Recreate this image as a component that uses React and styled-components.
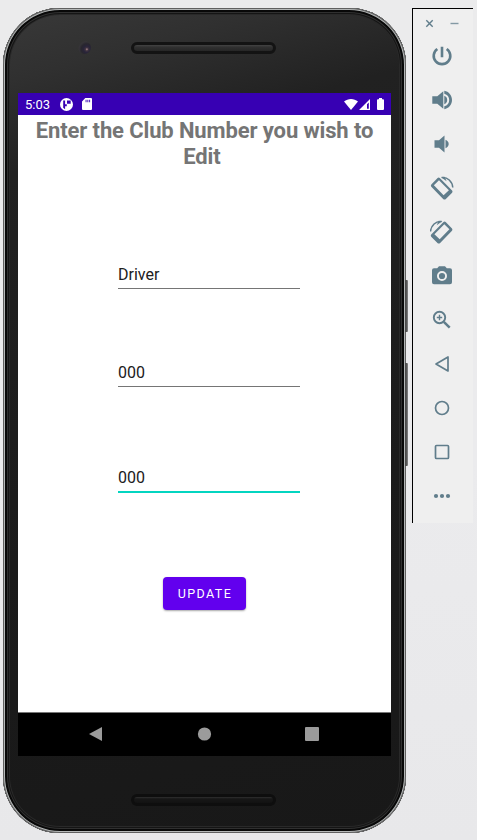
import React from "react";
import styled, { createGlobalStyle } from "styled-components";

const GlobalStyle = createGlobalStyle`
  * { box-sizing: border-box; }
  body { margin: 0; overflow: hidden; background: #e9e9eb; font-family: Roboto, sans-serif; }
`;

const Desktop = styled.div`
  display: flex;
  align-items: flex-start;
  gap: 6px;
  width: 477px;
  height: 840px;
  padding: 8px 4px 0 3px;
  background: linear-gradient(180deg, #ebebec 0%, #ebebed 55%, #e8e8ea 100%);
`;

const Phone = styled.div`
  position: relative;
  display: flex;
  flex-direction: column;
  flex: none;
  width: 403px;
  height: 825px;
  padding: 0 15px;
  border-radius: 57px;
  background: linear-gradient(165deg, #393939 0%, #303030 8%, #212121 18%, #1b1b1b 60%, #181818 100%);
  box-shadow: inset 0 0 0 1px #606060, inset 0 0 0 2px #b4b7b7, inset 0 0 0 4px #080808,
    inset 0 0 0 5px #303030, inset 0 0 0 6px #151515, inset 0 0 0 7px #292929;
`;

const SideKey = styled.span`
  position: absolute;
  left: 402px;
  top: ${(p) => p.$top}px;
  width: 3px;
  height: ${(p) => p.$height}px;
  border-radius: 0 1px 1px 0;
  background: linear-gradient(90deg, #444, #555 50%, #898989);
`;

const TopBezel = styled.div`
  display: flex;
  flex: none;
  align-items: center;
  height: 85px;
  padding: 0 0 6px 60px;
`;

const Camera = styled.span`
  width: 13px;
  height: 13px;
  margin-right: 40px;
  border-radius: 50%;
  background: radial-gradient(circle at 68% 64%, #8d7078 0 4%, #40343f 12%, #29243a 26%, #28262e 46%, #363438 64%, #323232 75%);
`;

const Speaker = styled.span`
  width: 145px;
  height: 12px;
  border: 3px solid ${(p) => (p.$dim ? "#0e0e0e" : "#131313")};
  border-radius: 6px;
  background: linear-gradient(180deg, ${(p) => (p.$dim ? "#303030, #171717 30%, #121212" : "#444, #303030 35%, #262626")});
`;

const BottomBezel = styled.div`
  display: flex;
  padding: 38px 0 0 113px;
`;

const Screen = styled.main`
  display: flex;
  flex: none;
  flex-direction: column;
  height: 663px;
  background: #fff;
`;

const StatusBar = styled.div`
  display: flex;
  flex: none;
  align-items: center;
  height: 22px;
  padding: 0 7px 0 7px;
  background: #3700b3;
  color: #fff;
  font-size: 13px;
  line-height: 22px;
`;

const Clock = styled.span`
  width: 35px;
  padding-top: 1px;
  font-weight: 400;
`;

const StatusIcon = styled.svg`
  flex: none;
  width: ${(p) => p.$w}px;
  height: ${(p) => p.$h}px;
  margin-left: ${(p) => p.$left || 0}px;
  fill: currentColor;
`;

const Spacer = styled.span`
  flex: 1;
`;

const Form = styled.form`
  display: flex;
  flex: 1;
  flex-direction: column;
  align-items: center;
`;

const Heading = styled.h1`
  width: 361px;
  margin: 3px 0 0;
  color: #757575;
  font-size: 22px;
  font-weight: 700;
  line-height: 26px;
  letter-spacing: -0.12px;
  text-align: center;
`;

const Field = styled.input`
  width: 182px;
  height: ${(p) => (p.$active ? 31 : 30)}px;
  margin: ${(p) => p.$gap}px 0 0 9px;
  padding: 1px 0 0;
  border: 0;
  border-bottom: ${(p) => (p.$active ? "2px solid #03d5c0" : "1px solid #757575")};
  border-radius: 0;
  outline: 0;
  background: transparent;
  color: #202020;
  font: 400 16px Roboto, sans-serif;
`;

const UpdateButton = styled.button`
  width: 83px;
  height: 33px;
  margin: 84px 0 0 0;
  padding: 0 0 0 1px;
  border: 0;
  border-radius: 4px;
  background: #6200ee;
  box-shadow: 0 1px 2px rgba(0, 0, 0, 0.35);
  color: #fff;
  font: 400 12.5px Roboto, sans-serif;
  letter-spacing: 1.4px;
`;

const NavBar = styled.nav`
  display: flex;
  flex: none;
  align-items: center;
  justify-content: space-between;
  height: 44px;
  padding: 0 71px 2px 70px;
  border-top: 1px solid #777;
  background: #000;
`;

const NavIcon = styled.svg`
  width: 16px;
  height: 16px;
  fill: #9b9b9b;
`;

const Toolbar = styled.aside`
  display: flex;
  flex: none;
  flex-direction: column;
  width: 61px;
  height: 515px;
  border-top: 1px solid #000;
  border-left: 1px solid #000;
  background: #efefef;
  color: #607d8b;
`;

const WindowControls = styled.div`
  display: flex;
  flex: none;
  align-items: center;
  justify-content: space-between;
  height: 25px;
  padding: 3px 14px 0 12px;
`;

const ControlIcon = styled.svg`
  width: 9px;
  height: 9px;
  fill: none;
  stroke: currentColor;
  stroke-width: 1.4;
  opacity: ${(p) => (p.$faded ? 0.75 : 1)};
`;

const Tool = styled.div`
  display: flex;
  flex: none;
  align-items: center;
  justify-content: center;
  height: 44px;
  padding-right: 2px;
`;

const ToolIcon = styled.svg`
  width: 24px;
  height: 24px;
  fill: currentColor;
`;

const Outline = styled.g`
  fill: none;
  stroke: currentColor;
  stroke-width: ${(p) => p.$weight || 1.5};
  stroke-linejoin: round;
`;

const RotateGlyph = () => (
  <>
    <path
      fillRule="evenodd"
      d="M7.6 1.9Q8.7 1 9.8 1.9L22.1 14.6Q23 15.7 22.1 16.8L15.6 23.2Q14.5 24 13.4 23.2L1.3 10.7Q.4 9.5 1.3 8.4ZM9 4.2L3.9 9.2 13.6 19.2 18.9 14.2Z"
    />
    <path d="M11.7 1.5C17.4 .7 22.4 5.6 22.8 11.5" fill="none" stroke="currentColor" strokeWidth="1.5" />
    <path d="M11 1.2L14.6.7 16.6 5.2Z" />
  </>
);

const tools = [
  <Outline key="power" $weight={2.6}><path d="M7.3 5a8.3 8.3 0 1 0 9.4 0M12 2.7v10.6" /></Outline>,
  <path key="up" d="M2.3 8.3v7.4h5l6 5V3.3l-6 5zM14.3 7.8v8.4a4.5 4.5 0 0 0 0-8.4zM14.3 2.8v2.9c3.2.8 4.9 3.3 4.9 6.3s-1.7 5.5-4.9 6.3v2.9c4.5-.8 7.7-4.5 7.7-9.2s-3.2-8.4-7.7-9.2z" />,
  <path key="down" d="M4.5 8.3v7.4H9l5.5 4.8V3.5L9 8.3zM15.5 7.8v8.4c1.9-.7 3.2-2.3 3.2-4.2s-1.3-3.5-3.2-4.2z" />,
  <RotateGlyph key="left" />,
  <g key="right" transform="translate(23.3 0) scale(-1 1)"><RotateGlyph /></g>,
  <path key="camera" fillRule="evenodd" d="M9 2.2L7.2 4.2H4a2 2 0 0 0-2 2v12a2 2 0 0 0 2 2h16a2 2 0 0 0 2-2v-12a2 2 0 0 0-2-2h-3.2L15 2.2zM12 7a5 5 0 1 1 0 10 5 5 0 0 1 0-10zm0 1.9a3.1 3.1 0 1 0 0 6.2 3.1 3.1 0 0 0 0-6.2z" />,
  <Outline key="zoom" $weight={1.9}><circle cx="9.5" cy="9.5" r="5.7" /><path d="M9.5 6.8v5.4M6.8 9.5h5.4" strokeWidth="1.4" /><path d="M13.8 13.8l5.9 5.9" strokeWidth="2.5" /></Outline>,
  <Outline key="back" $weight={1.7}><path d="M18 5v14L6 12z" /></Outline>,
  <Outline key="home" $weight={1.7}><circle cx="12" cy="12" r="6.5" /></Outline>,
  <Outline key="recent" $weight={1.7}><rect x="5.5" y="5.5" width="13" height="13" rx="1" /></Outline>,
  <g key="more"><circle cx="6" cy="12" r="2.1" /><circle cx="12" cy="12" r="2.1" /><circle cx="18" cy="12" r="2.1" /></g>,
];

export default function App() {
  return (
    <>
      <GlobalStyle />
      <Desktop>
        <Phone>
          <SideKey $top={272} $height={52} />
          <SideKey $top={355} $height={103} />
          <TopBezel>
            <Camera />
            <Speaker />
          </TopBezel>
          <Screen>
            <StatusBar>
              <Clock>5:03</Clock>
              <StatusIcon $w={13} $h={13} viewBox="0 0 13 13">
                <path fillRule="evenodd" d="M6.5 0a6.5 6.5 0 1 1 0 13 6.5 6.5 0 0 1 0-13zM3.2 2.5v7.3l1.9 1.5V8.2H6.8V6.2H5.1V2.5zM7 2.5v3.2h3.7V2.5z" />
              </StatusIcon>
              <StatusIcon $w={10} $h={12} $left={9} viewBox="0 0 10 12">
                <path fillRule="evenodd" d="M3.3 0H9a1 1 0 0 1 1 1v10a1 1 0 0 1-1 1H1a1 1 0 0 1-1-1V3.4zM3.6 1.8v2.4h.9V1.8zm1.8 0v2.4h.9V1.8zm1.8 0v2.4h.9V1.8z" />
              </StatusIcon>
              <Spacer />
              <StatusIcon $w={14} $h={11} viewBox="0 0 14 11">
                <path d="M0 2.6C4-.8 10-.8 14 2.6L7 11z" />
              </StatusIcon>
              <StatusIcon $w={11} $h={11} $left={1} viewBox="0 0 11 11">
                <path fillRule="evenodd" d="M11 0v11H0zM9.8 3.4L8 5.2V9.8h1.8z" />
              </StatusIcon>
              <StatusIcon $w={7} $h={12} $left={7} viewBox="0 0 7 12">
                <path d="M2 0h3v1.2h1q1 0 1 1V11q0 1-1 1H1q-1 0-1-1V2.2q0-1 1-1h1z" />
              </StatusIcon>
            </StatusBar>
            <Form onSubmit={(event) => event.preventDefault()}>
              <Heading>Enter the Club Number you wish to Edit&nbsp;</Heading>
              <Field $gap={89} defaultValue="Driver" aria-label="Club" />
              <Field $gap={68} defaultValue="000" aria-label="Minimum distance" />
              <Field $gap={75} $active defaultValue="000" aria-label="Maximum distance" />
              <UpdateButton>UPDATE</UpdateButton>
            </Form>
            <NavBar>
              <NavIcon viewBox="0 0 16 16"><path d="M14 1v14L1 8z" /></NavIcon>
              <NavIcon viewBox="0 0 16 16"><circle cx="8.5" cy="8" r="6.6" /></NavIcon>
              <NavIcon viewBox="0 0 16 16"><rect x="1" y="1" width="14" height="14" rx="1" /></NavIcon>
            </NavBar>
          </Screen>
          <BottomBezel>
            <Speaker $dim />
          </BottomBezel>
        </Phone>
        <Toolbar>
          <WindowControls>
            <ControlIcon viewBox="0 0 9 9"><path d="M1.3 1.3l6.4 6.4M7.7 1.3L1.3 7.7" /></ControlIcon>
            <ControlIcon $faded viewBox="0 0 9 9"><path d="M.5 4.5h8" /></ControlIcon>
          </WindowControls>
          {tools.map((glyph) => (
            <Tool key={glyph.key}>
              <ToolIcon viewBox="0 0 24 24">{glyph}</ToolIcon>
            </Tool>
          ))}
        </Toolbar>
      </Desktop>
    </>
  );
}
